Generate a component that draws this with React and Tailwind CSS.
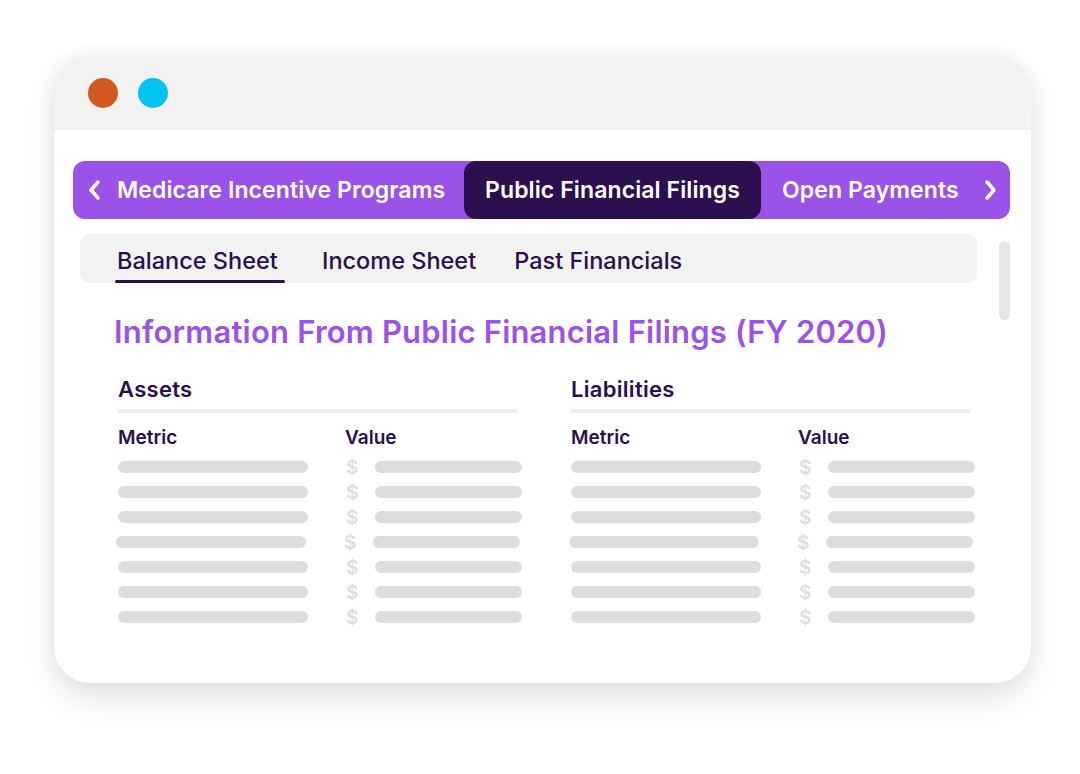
function ChevronLeft() {
  return (
    <svg width="14" height="22" viewBox="0 0 14 22" fill="none">
      <path d="M11 3 L4 11 L11 19" stroke="white" strokeWidth="3.5" strokeLinecap="round" strokeLinejoin="round" />
    </svg>
  );
}

function ChevronRight() {
  return (
    <svg width="14" height="22" viewBox="0 0 14 22" fill="none">
      <path d="M3 3 L10 11 L3 19" stroke="white" strokeWidth="3.5" strokeLinecap="round" strokeLinejoin="round" />
    </svg>
  );
}

function Table({ title }) {
  const rows = [0, 1, 2, 3, 4, 5, 6];
  return (
    <div className="w-[405px]">
      <div className="text-[22px] font-semibold text-[#2b0f4e] leading-none tracking-[0.3px]">{title}</div>
      <div className="mt-[9px] h-[4px] w-[399px] bg-[#ececec]" />
      <div className="mt-[15px] flex text-[19px] font-semibold text-[#2b0f4e] leading-none">
        <div className="w-[227px]">Metric</div>
        <div>Value</div>
      </div>
      <div className="mt-[14px] flex flex-col gap-[13px]">
        {rows.map((r) => (
          <div key={r} className={r === 3 ? "flex items-center h-[12px] -ml-[2px]" : "flex items-center h-[12px]"}>
            <div className="w-[190px] h-[12px] rounded-full bg-[#dddddd]" />
            <div className="ml-[38px] w-[13px] text-[19px] font-semibold text-[#dedede] leading-none">$</div>
            <div className="ml-[16px] w-[147px] h-[12px] rounded-full bg-[#dddddd]" />
          </div>
        ))}
      </div>
    </div>
  );
}

export default function App() {
  return (
    <div className="min-h-[774px] bg-white pt-[55px] pl-[54px]" style={{ fontFamily: "Inter, 'Noto Sans', sans-serif" }}>
      <div className="w-[977px] h-[628px] rounded-[36px] bg-white overflow-hidden shadow-[0_16px_32px_rgba(0,0,0,0.1),0_0_18px_rgba(0,0,0,0.05)]">
        <div className="h-[75px] bg-[#f2f2f2] flex items-center pl-[34px] gap-[20px]">
          <div className="w-[30px] h-[30px] rounded-full bg-[#d25a22]" />
          <div className="w-[30px] h-[30px] rounded-full bg-[#00c3f2]" />
        </div>
        <div className="pt-[31px] pl-[19px] pr-[21px]">
          <div className="h-[58px] rounded-[12px] bg-[#9b52e8] flex items-center text-white text-[23px] font-semibold tracking-[0.1px]">
            <div className="pl-[14px] pr-[16px] flex items-center"><ChevronLeft /></div>
            <div className="w-[347px]">Medicare Incentive Programs</div>
            <div className="h-[58px] w-[297px] rounded-[12px] bg-[#2b0f4e] flex items-center justify-center">Public Financial Filings</div>
            <div className="pl-[21px] w-[223px]">Open Payments</div>
            <div className="flex items-center"><ChevronRight /></div>
          </div>
          <div className="flex pt-[15px] pl-[7px] gap-[22px]">
            <div className="w-[898px]">
              <div className="h-[49px] rounded-[10px] bg-[#f2f2f2] flex items-end pl-[35px] text-[23.5px] font-medium text-[#2b0f4e]">
                <div className="w-[170px] h-full flex flex-col justify-end">
                  <div className="pl-[2px] pb-[8px] leading-none">Balance Sheet</div>
                  <div className="h-[3px] rounded-full bg-[#2b0f4e]" />
                </div>
                <div className="ml-[37px] pb-[11px] leading-none">Income Sheet</div>
                <div className="ml-[38px] pb-[11px] leading-none">Past Financials</div>
              </div>
              <div className="pl-[34px] mt-[33px] text-[31px] font-semibold text-[#9b52e8] leading-none tracking-[0.2px]">
                Information From Public Financial Filings (FY 2020)
              </div>
              <div className="pl-[38px] mt-[31px] flex gap-[48px]">
                <Table title="Assets" />
                <Table title="Liabilities" />
              </div>
            </div>
            <div className="mt-[7px] w-[11px] h-[79px] rounded-full bg-[#e6e6e6]" />
          </div>
        </div>
      </div>
    </div>
  );
}
